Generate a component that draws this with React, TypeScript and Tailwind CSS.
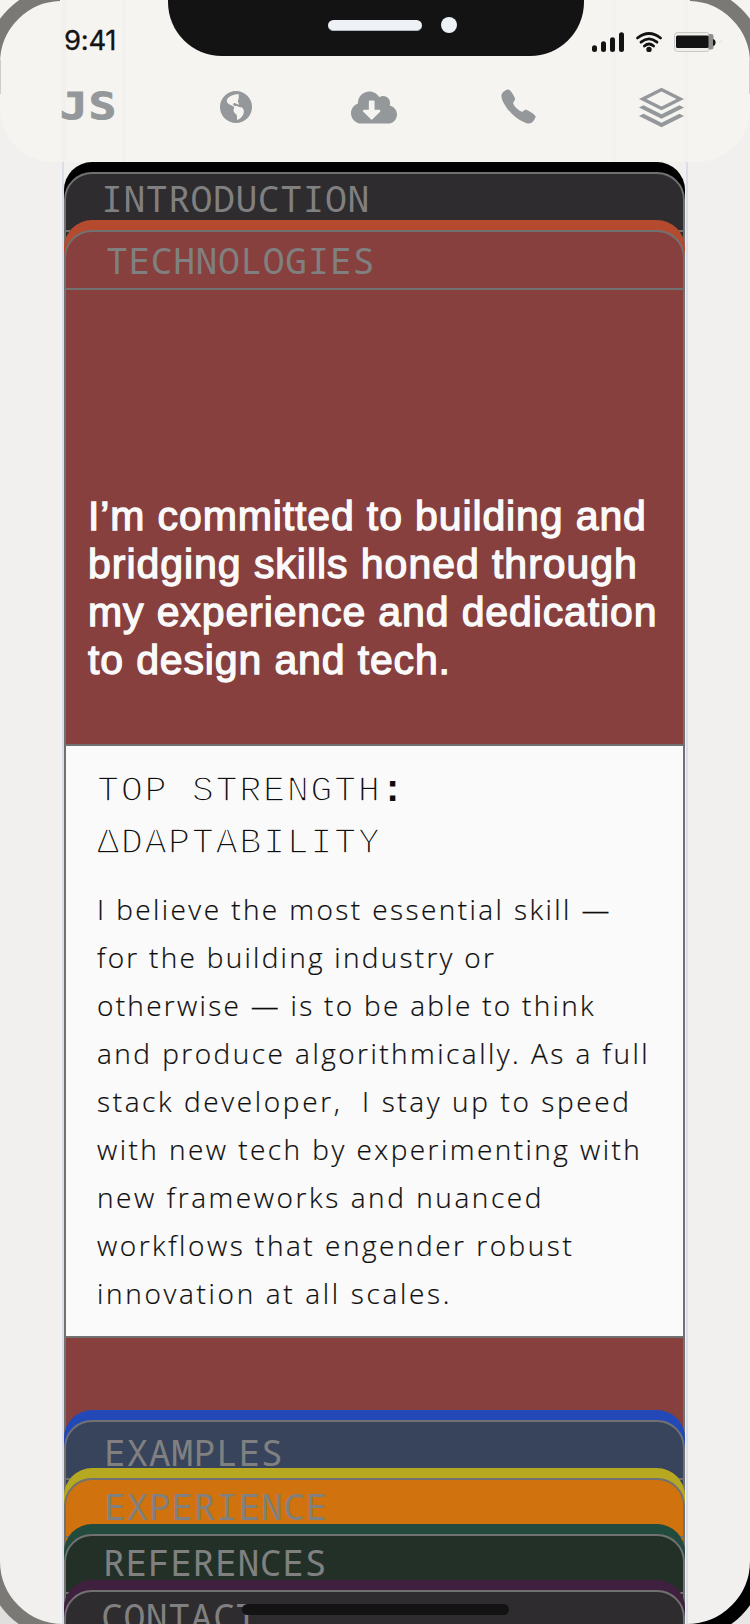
import type { ReactNode } from "react";
import { FaCloudDownloadAlt } from "react-icons/fa";
import { IoCall } from "react-icons/io5";
import { ImStack } from "react-icons/im";

function DeviceFrame() {
  return (
    <svg className="pointer-events-none absolute inset-0" width="750" height="1624" viewBox="0 0 750 1624" fill="none">
      <circle cx="62" cy="63" r="69" stroke="#7a7976" strokeWidth="14" clipPath="url(#tl)" />
      <circle cx="688" cy="63" r="69" stroke="#7a7976" strokeWidth="14" clipPath="url(#tr)" />
      <path d="M0 1603V1624H21Q8 1616 0 1603Z" fill="#e0dfde" />
      <circle cx="63" cy="1561" r="70" stroke="#7a7976" strokeWidth="14" clipPath="url(#bl)" />
      <path d="M750 1603V1624H729Q742 1616 750 1603Z" fill="#e8e7e6" />
      <circle cx="687" cy="1561" r="70" stroke="#000" strokeWidth="14" clipPath="url(#br)" />
      <path d="M0.5 60V94M749.5 60V94" stroke="#cfcecb" />
      <defs>
        <clipPath id="tl"><path d="M0 0H60V63H0Z" /></clipPath>
        <clipPath id="tr"><path d="M690 0H750V63H690Z" /></clipPath>
        <clipPath id="bl"><path d="M0 1561H63V1624H0Z" /></clipPath>
        <clipPath id="br"><path d="M687 1561H750V1624H687Z" /></clipPath>
      </defs>
    </svg>
  );
}

function Globe() {
  return (
    <svg width="32" height="32" viewBox="0 0 96 96">
      <circle cx="48" cy="48" r="48" fill="#94989a" />
      <path
        d="M57 10C44 9 28 15 22 24C18 31 22 38 32 42C38 45 42 47 43 50C38 56 41 65 48 69C52 73 51 80 51 87C62 85 66 76 70 70C73 62 72 53 64 49C60 48 56 49 52 45C48 44 43 46 40 43C38 38 42 35 46 37C50 41 53 38 57 42C58 36 52 34 54 28C58 24 55 16 57 10Z"
        fill="#f5f4f0"
      />
    </svg>
  );
}

function StatusIcons() {
  return (
    <svg width="132" height="26" viewBox="590 28 132 26" fill="none">
      <g stroke="#131313" strokeWidth="5" strokeLinecap="round">
        <path d="M594.5 47.7V49.5M603.5 43.8V49.5M612.5 39.8V49.5M621.5 34.8V49.5" />
      </g>
      <g stroke="#131313" strokeWidth="2.8" strokeLinecap="round">
        <path d="M637.5 38Q649 29 660.5 38" />
        <path d="M641 42.2Q649 35.6 657 42.2" />
        <path d="M644.4 46Q649 42 653.6 46" />
      </g>
      <circle cx="649" cy="49.4" r="2.7" fill="#131313" />
      <rect x="674.5" y="32.5" width="35" height="19" rx="3" fill="#efeeeb" stroke="#c9c8c6" />
      <rect x="708" y="34" width="5.5" height="15.500" rx="2" fill="#8f8f8d" />
      <path d="M713 39Q715.600 39.500 715.600 42.500T713 46Z" fill="#131313" />
      <rect x="676" y="35.500" width="32.500" height="12.500" rx="1.500" fill="#131313" />
      <circle cx="721" cy="41.500" r="1.500" fill="#eae9e6" />
    </svg>
  );
}

function Header() {
  return (
    <header className="relative h-[162px] shrink-0 overflow-hidden rounded-b-[54px] bg-[#f5f4f0]">
      <div className="absolute inset-y-0 left-[62px] w-1 bg-[#f2f1ee]" />
      <div className="absolute inset-y-0 left-[122px] w-1 bg-[#f2f1ee]" />
      <div className="absolute inset-y-0 left-[612px] w-1 bg-[#f2f1ee]" />
      <div className="absolute inset-y-0 left-[684px] w-1 bg-[#f2f1ee]" />
      <div className="relative flex h-[77px] items-start">
        <span className="ml-[64px] mt-[24px] w-[104px] font-['Inter',sans-serif] text-[27.5px] leading-[33px] tracking-[-0.3px] text-[#131313] [-webkit-text-stroke:0.3px_#131313]">
          9:41
        </span>
        <div className="flex h-[56px] w-[416px] rounded-b-[54px] bg-[#131313]">
          <div className="ml-[160px] mt-[20px] h-[11px] w-[94px] rounded-full border-b border-[#b4b9bf] bg-[#eef2f6]" />
          <div className="ml-[19px] mt-[17px] size-4 rounded-full bg-[#eef2f6]" />
        </div>
        <div className="ml-[6px] mt-[28px]">
          <StatusIcons />
        </div>
      </div>
      <nav className="relative flex h-[60px] items-center text-[#94989a]">
        <span className="ml-[60px] w-[160px] origin-left scale-x-[1.2] pb-[3px] font-['DejaVu_Sans_Mono',monospace] text-[38px] leading-none font-bold tracking-[1px] [-webkit-text-stroke:1px_#94989a]">
          JS
        </span>
        <Globe />
        <FaCloudDownloadAlt className="ml-[99px] h-[37px] w-[46px]" />
        <IoCall className="mb-[2px] ml-[102px] size-[39px]" />
        <ImStack className="ml-[101px] size-[45px]" />
      </nav>
    </header>
  );
}

type TabProps = { label: string; height: string; lip: string; fill: string; pad: string };

function Tab({ label, height, lip, fill, pad }: TabProps) {
  return (
    <div className={`relative shrink-0 ${height}`}>
      <div className={`h-[70px] rounded-t-[28px] pt-[10px] ${lip}`}>
        <div className={`h-[60px] rounded-t-[28px] border-2 border-[#717171] ${fill} ${pad}`}>
          <span className="block font-['Noto_Sans_Mono','DejaVu_Sans_Mono',monospace] text-[36.500px] leading-[40px] tracking-[0.500px] text-[#808080]">
            {label}
          </span>
        </div>
      </div>
      <div className={`h-[26px] border-x-2 border-[#717171] ${fill}`} />
    </div>
  );
}

function Lines({ children }: { children: ReactNode }) {
  return <div className="flex flex-col whitespace-pre">{children}</div>;
}

export default function App() {
  return (
    <div className="relative flex h-[1624px] w-[750px] flex-col overflow-hidden bg-[#f1f0ee]">
      <Header />
      <main className="ml-[62px] flex w-[626px] flex-1 flex-col border-x-2 border-[#dadee6] pr-px">
        <Tab label="INTRODUCTION" height="h-[58px]" lip="bg-black" fill="bg-[#2e2c2f]" pad="pl-[35px] pt-[4px]" />
        <Tab label="TECHNOLOGIES" height="h-[70px]" lip="bg-[#b64a2f]" fill="bg-[#87403e]" pad="pl-[40px] pt-[8px]" />
        <section className="relative -mb-[40px] flex h-[1160px] shrink-0 flex-col border-x-2 border-[#717171] bg-[#87403e]">
          <div className="h-[454px] pt-[202px] pl-[22px] font-['Liberation_Sans',Arial,sans-serif] text-[41px] leading-[48px] text-[#fafafa] [-webkit-text-stroke:1.300px_#fafafa]">
            <Lines>
              <span className="tracking-[0.880px]">I’m committed to building and</span>
              <span className="tracking-[0.960px]">bridging skills honed through</span>
              <span className="tracking-[0.880px]">my experience and dedication</span>
              <span className="tracking-[0.860px]">to design and tech.</span>
            </Lines>
          </div>
          <div className="h-[594px] shrink-0 border-y-2 border-[#717171] bg-[#fafafa] pl-[31px] text-[#0d0d0d]">
            <h2 className="pt-[19px] font-['Liberation_Mono',monospace] text-[37px] leading-[52px] tracking-[1.500px] whitespace-pre [-webkit-text-stroke:1.600px_#fafafa]">
              TOP STRENGTH<span className="font-bold [-webkit-text-stroke:0.100px_#0d0d0d]">:</span>
              <br />
              ΔDAPTABILITY
            </h2>
            <div className="mt-[16px] font-['Open_Sans',sans-serif] text-[28px] leading-[48px] font-light [-webkit-text-stroke:0.200px_#0d0d0d]">
              <Lines>
                <span className="tracking-[2.420px]">I believe the most essential skill —</span>
                <span className="tracking-[2.270px]">for the building industry or</span>
                <span className="tracking-[2.290px]">otherwise — is to be able to think</span>
                <span className="tracking-[2.470px]">and produce algorithmically. As a full</span>
                <span className="tracking-[2.620px]">stack developer,  I stay up to speed</span>
                <span className="tracking-[2.450px]">with new tech by experimenting with</span>
                <span className="tracking-[2.570px]">new frameworks and nuanced</span>
                <span className="tracking-[2.520px]">workflows that engender robust</span>
                <span className="tracking-[2.670px]">innovation at all scales.</span>
              </Lines>
            </div>
          </div>
        </section>
        <Tab label="EXAMPLES" height="h-[58px]" lip="bg-[#2349b9]" fill="bg-[#37445b]" pad="pl-[38px] pt-[10px]" />
        <Tab label="EXPERIENCE" height="h-[56px]" lip="bg-[#b6a821]" fill="bg-[#d0730f]" pad="pl-[38px] pt-[6px]" />
        <Tab label="REFERENCES" height="h-[56px]" lip="bg-[#234b3d]" fill="bg-[#223028]" pad="pl-[37px] pt-[6px]" />
        <Tab label="CONTACT" height="h-[44px]" lip="bg-[#3f203e]" fill="bg-[#2e2c2f]" pad="pl-[35px] pt-[4px]" />
      </main>
      <DeviceFrame />
      <div className="absolute top-[1604px] left-[242px] h-[11px] w-[267px] rounded-full bg-[#131313]" />
    </div>
  );
}
